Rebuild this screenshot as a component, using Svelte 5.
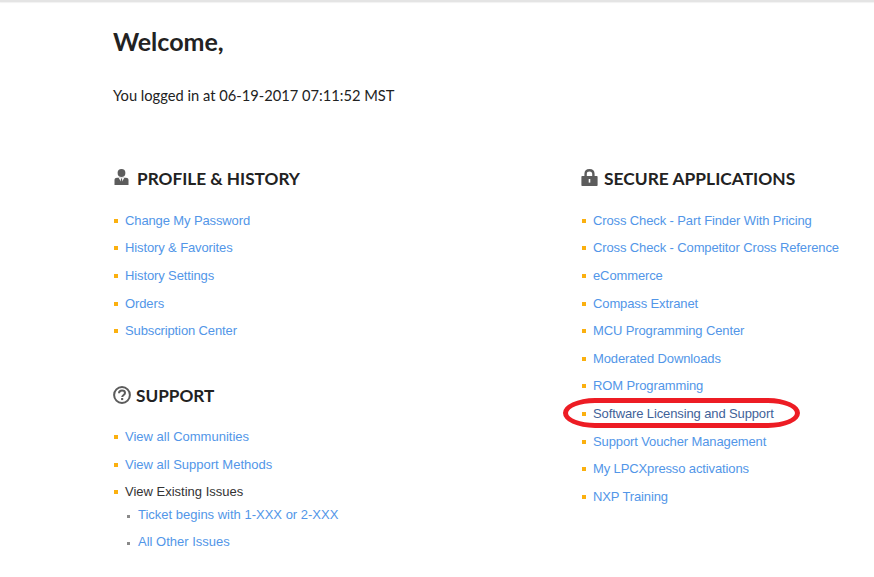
<script>
  const profile = ['Change My Password', 'History & Favorites', 'History Settings', 'Orders', 'Subscription Center'];
  const apps = [
    'Cross Check - Part Finder With Pricing',
    'Cross Check - Competitor Cross Reference',
    'eCommerce',
    'Compass Extranet',
    'MCU Programming Center',
    'Moderated Downloads',
    'ROM Programming',
    'Software Licensing and Support',
    'Support Voucher Management',
    'My LPCXpresso activations',
    'NXP Training'
  ];
</script>

<div class="topbar"></div>

<main class="page">
  <h1>Welcome,</h1>
  <p class="login">You logged in at 06-19-2017 07:11:52 MST</p>

  <div class="columns">
    <div class="col-left">
      <section>
        <h2>
          <svg class="icon person" viewBox="0 0 15 16" width="15" height="16">
            <circle cx="7.5" cy="4" r="3.9" fill="#5c5c5c" />
            <path d="M0.5 16V11C0.5 9.6 1.6 8.8 3 8.8H12C13.4 8.8 14.5 9.6 14.5 11V16Z" fill="#5c5c5c" />
            <path d="M4.6 8.8H10.4L7.5 13.4Z" fill="#fff" />
            <path d="M6.8 9.4H8.2L8.1 10.8L8.7 14.4L7.5 16L6.3 14.4L6.9 10.8Z" fill="#5c5c5c" />
          </svg>
          PROFILE &amp; HISTORY
        </h2>
        <ul>
          {#each profile as item}
            <li><a href="#top">{item}</a></li>
          {/each}
        </ul>
      </section>

      <section class="support">
        <h2>
          <svg class="icon" viewBox="0 0 18 18" width="18" height="18">
            <circle cx="9" cy="9" r="7.9" fill="none" stroke="#5c5c5c" stroke-width="2" />
            <path d="M6 7.2C6.1 5.4 7.4 4.6 9 4.6C10.8 4.6 12 5.6 12 7C12 8.9 9.2 9 9.2 11" fill="none" stroke="#5c5c5c" stroke-width="2" />
            <rect x="8.1" y="12" width="2.1" height="2.1" fill="#5c5c5c" />
          </svg>
          SUPPORT
        </h2>
        <ul>
          <li><a href="#top">View all Communities</a></li>
          <li><a href="#top">View all Support Methods</a></li>
          <li class="parent">
            View Existing Issues
            <ul class="sub">
              <li><a href="#top">Ticket begins with 1-XXX or 2-XXX</a></li>
              <li><a href="#top">All Other Issues</a></li>
            </ul>
          </li>
        </ul>
      </section>
    </div>

    <div class="col-right">
      <section>
        <h2>
          <svg class="icon lock" viewBox="0 0 17 17" width="17" height="17">
            <path d="M4.6 8V5C4.6 2.6 6.2 1.2 8.5 1.2C10.8 1.2 12.4 2.6 12.4 5V8" fill="none" stroke="#5c5c5c" stroke-width="2.4" />
            <rect x="0.4" y="7" width="16.2" height="10" rx="0.8" fill="#5c5c5c" />
            <rect x="7.7" y="10" width="1.6" height="3.6" fill="#fff" />
          </svg>
          SECURE APPLICATIONS
        </h2>
        <ul>
          {#each apps as item}
            <li class:marked={item === 'Software Licensing and Support'}>
              <a href="#top">{item}</a>
              {#if item === 'Software Licensing and Support'}
                <span class="circled"></span>
              {/if}
            </li>
          {/each}
        </ul>
      </section>
    </div>
  </div>
</main>

<style>
  :global(body) {
    margin: 0;
    background: #fff;
    overflow: hidden;
  }

  .topbar {
    height: 2px;
    background: #e4e4e4;
    box-shadow: 0 1px 1px #f2f2f2;
  }

  .page {
    padding: 23px 0 0 113px;
    font-family: "Liberation Sans", Arial, sans-serif;
    color: #222;
  }

  h1 {
    margin: 0;
    font-family: Lato, sans-serif;
    font-size: 25px;
    line-height: 32px;
    font-weight: 700;
    color: #222;
  }

  .login {
    margin: 28px 0 0;
    font-family: Lato, sans-serif;
    font-size: 14.7px;
    line-height: 20px;
    color: #222;
  }

  .columns {
    display: flex;
    margin-top: 60px;
  }

  .col-left {
    width: 468px;
  }

  h2 {
    display: flex;
    align-items: center;
    gap: 7px;
    margin: 0;
    height: 26px;
    font-family: Lato, sans-serif;
    font-size: 17.2px;
    font-weight: 700;
    color: #222;
  }

  .col-right h2 {
    font-size: 17.4px;
  }

  .icon {
    flex: none;
    margin-top: -2px;
  }

  .person {
    margin-left: 1px;
    margin-right: 1px;
  }

  .lock {
    margin-right: -1px;
  }

  .support {
    margin-top: 38.2px;
  }

  .support h2 {
    gap: 5px;
  }

  ul {
    list-style: none;
    margin: 15.8px 0 0;
    padding: 0;
  }

  .support ul {
    margin-top: 14.3px;
  }

  li {
    position: relative;
    padding-left: 12px;
    font-size: 13px;
    letter-spacing: -0.12px;
    line-height: 27.6px;
    color: #333;
  }

  .support li {
    letter-spacing: 0;
  }

  li::before {
    content: "";
    position: absolute;
    left: 1px;
    top: 12px;
    width: 4px;
    height: 4px;
    background: #fbb00f;
  }

  a {
    color: #5296e8;
    text-decoration: none;
  }

  .marked a {
    color: #3f6299;
  }

  .support .sub {
    margin-top: -5.2px;
  }

  .sub li {
    padding-left: 13px;
  }

  .sub li::before {
    left: 2px;
    top: 14px;
    width: 3px;
    height: 3px;
    background: #8a8a8a;
  }

  .circled {
    position: absolute;
    left: -18px;
    top: -2px;
    width: 227px;
    height: 20px;
    border: 5px solid #ed1c24;
    border-radius: 32px / 15px;
  }
</style>
